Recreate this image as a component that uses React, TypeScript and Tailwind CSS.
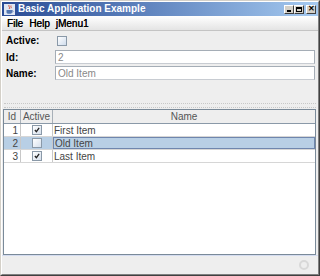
import React from "react";

const font = { fontFamily: '"Liberation Sans", Arial, sans-serif' };

function WinBtn({ children }: { children: React.ReactNode }) {
  return (
    <div className="w-[10px] h-[9px] bg-[#d4d0c8] border border-t-white border-l-white border-r-[#404040] border-b-[#404040] flex items-center justify-center">
      {children}
    </div>
  );
}

function JavaIcon() {
  return (
    <svg width="11" height="11" viewBox="0 0 11 11">
      <rect x="0" y="0" width="11" height="11" fill="#dfe6f2" />
      <path d="M5 1 C4 2.5 6.5 3 5.2 5 M7 1.5 C6.3 2.6 7.8 3 7 4.3" stroke="#d2452b" strokeWidth="0.9" fill="none" />
      <path d="M2.5 6 H8 V8.2 C8 9.3 7 9.8 5.3 9.8 C3.5 9.8 2.5 9.3 2.5 8.2 Z" fill="#5477b0" />
      <path d="M8 6.6 C9.6 6.4 9.6 8.2 8 8.2" stroke="#5477b0" strokeWidth="0.8" fill="none" />
    </svg>
  );
}

function SmallCheck({ checked }: { checked: boolean }) {
  return (
    <div className="w-[10px] h-[10px] border border-[#8a99a8] bg-gradient-to-br from-[#ffffff] to-[#d6e0ec] flex items-center justify-center">
      {checked && (
        <svg width="6" height="6" viewBox="0 0 7 7">
          <path d="M1 3.5 L2.8 5.5 L6 1" stroke="#222" strokeWidth="1.5" fill="none" />
        </svg>
      )}
    </div>
  );
}

const rows = [
  { id: 1, active: true, name: "First Item" },
  { id: 2, active: false, name: "Old Item" },
  { id: 3, active: true, name: "Last Item" },
];

export default function App() {
  return (
    <div
      className="w-[320px] h-[276px] bg-[#d4d0c8] border border-t-[#d4d0c8] border-l-[#d4d0c8] border-r-[#404040] border-b-[#404040] flex flex-col"
      style={font}
    >
      <div className="flex-1 flex flex-col border border-t-white border-l-white border-r-[#808080] border-b-[#808080] min-h-0">
        {/* Title bar */}
        <div className="h-[14px] flex items-center bg-gradient-to-r from-[#2a4b94] to-[#a6caf0] pl-[2px] pr-[2px] shrink-0">
          <JavaIcon />
          <span className="ml-[3px] text-white font-bold text-[10px] leading-none">Basic Application Example</span>
          <div className="ml-auto flex items-center">
            <WinBtn>
              <div className="w-[4px] h-[1.5px] bg-black mt-[4px] mr-[1px]" />
            </WinBtn>
            <WinBtn>
              <div className="w-[6px] h-[5px] border border-black border-t-2" />
            </WinBtn>
            <div className="w-[2px]" />
            <WinBtn>
              <span className="text-[8px] leading-none font-bold text-black">✕</span>
            </WinBtn>
          </div>
        </div>
        {/* Main area */}
        <div className="flex-1 flex flex-col bg-[#eeeeee] min-h-0">
          {/* Menu bar */}
          <div className="h-[15px] flex items-center bg-gradient-to-b from-[#ffffff] to-[#e4e4e4] border-b border-[#c4c4c4] text-[10px] text-black shrink-0 pl-[5px] gap-[6px]" style={{ textShadow: "0.3px 0 0 #000" }}>
            <span>File</span>
            <span>Help</span>
            <span>jMenu1</span>
          </div>
          {/* Form */}
          <div className="h-[72px] flex flex-col pl-[4px] pr-[3px] pt-[4px] text-[10px] shrink-0">
            <div className="h-[11px] flex items-center">
              <span className="w-[51px] font-bold text-black">Active:</span>
              <div className="w-[10px] h-[10px] border border-[#8a99a8] bg-gradient-to-br from-[#ffffff] to-[#cfdcec]" />
            </div>
            <div className="h-[14px] mt-[4px] flex items-center">
              <span className="w-[49px] font-bold text-black">Id:</span>
              <div className="flex-1 h-[14px] bg-white border border-[#a5adb6] border-b-[#c8ccd2] flex items-center pl-[2px] text-[#888]">2</div>
            </div>
            <div className="h-[14px] mt-[2px] flex items-center">
              <span className="w-[49px] font-bold text-black">Name:</span>
              <div className="flex-1 h-[14px] bg-white border border-[#a5adb6] border-b-[#c8ccd2] flex items-center pl-[2px] text-[#888]">Old Item</div>
            </div>
          </div>
          {/* Divider */}
          <div className="h-[5px] mx-[2px] border-t border-b border-dotted border-[#c8c8c8] shrink-0" />
          {/* Table */}
          <div className="flex-1 flex flex-col ml-[1px] mt-[1px] mr-[2px] border border-[#7a8a99] bg-white min-h-0">
            <div className="h-[14px] flex bg-[#eeeeee] border-b border-[#8a99a8] text-[10px] text-[#555] shrink-0">
              <div className="w-[17px] border-r border-[#a8b0b8] flex items-center justify-center">Id</div>
              <div className="w-[32px] border-r border-[#a8b0b8] flex items-center justify-center">Active</div>
              <div className="flex-1 flex items-center justify-center">Name</div>
            </div>
            {rows.map((r) => {
              const sel = r.id === 2;
              return (
                <div
                  key={r.id}
                  className={`h-[13px] flex text-[10px] text-[#444] border-b border-[#d6d6d6] ${sel ? "bg-[#b8cfe5]" : "bg-white"}`}
                >
                  <div className="w-[17px] border-r border-[#c8c8c8] flex items-center justify-end pr-[2px]">{r.id}</div>
                  <div className="w-[32px] border-r border-[#c8c8c8] flex items-center justify-center">
                    <SmallCheck checked={r.active} />
                  </div>
                  <div className={`flex-1 flex items-center pl-[1px] ${sel ? "border border-[#6f86ad]" : ""}`}>{r.name}</div>
                </div>
              );
            })}
          </div>
          {/* Status bar */}
          <div className="h-[19px] border-t border-[#d4dcf0] flex items-center justify-end pr-[9px] shrink-0">
            <div className="w-[10px] h-[10px] rounded-full border-2 border-[#d8d8d8]" />
          </div>
        </div>
      </div>
    </div>
  );
}
